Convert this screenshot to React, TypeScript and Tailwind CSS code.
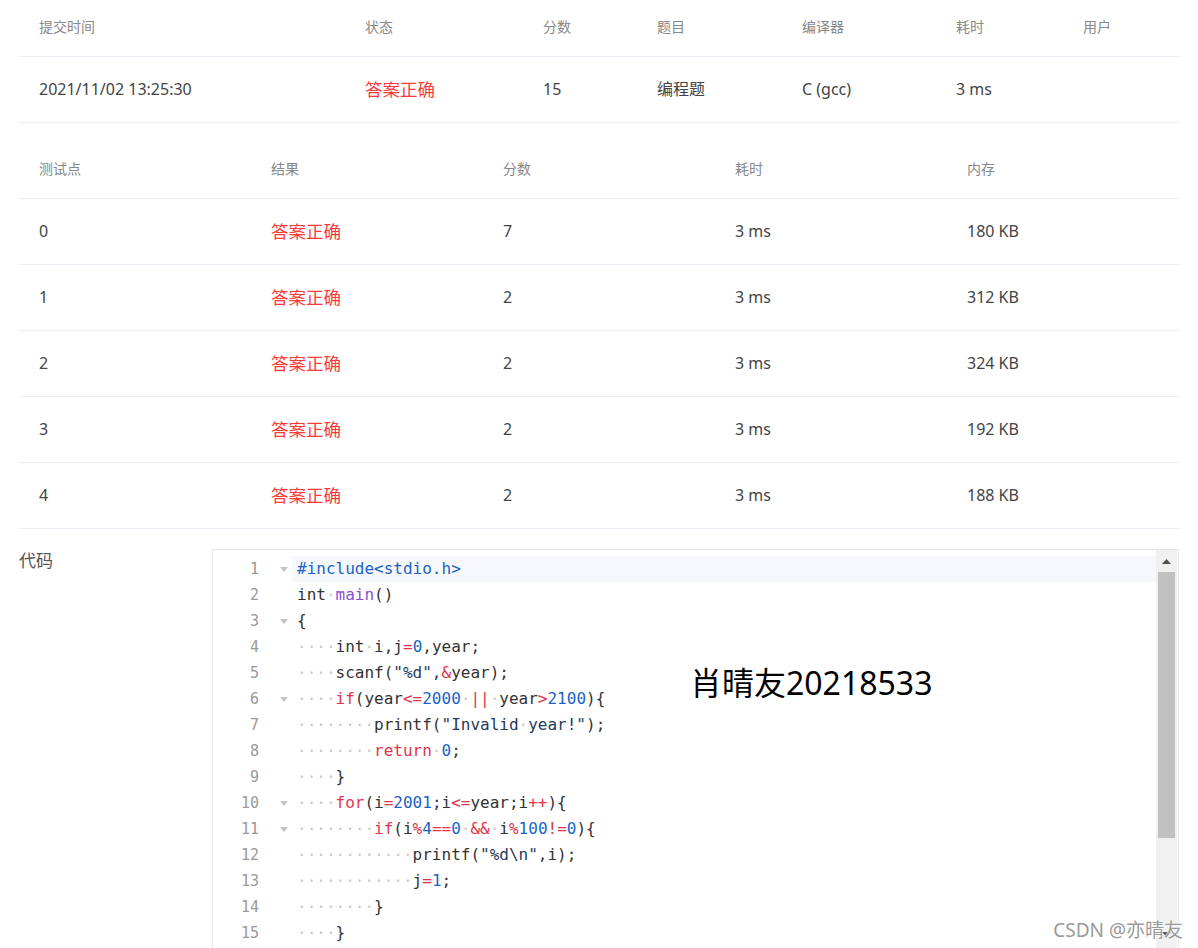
import React from "react";

const RED = "#e0344b";
const BLUE = "#1a63c6";
const PURPLE = "#8a4fcf";
const STR = "#1f3a5c";
const DOT = "#c9c9c9";

type Tok = [string, string?];

const summaryCols = ["326px", "178px", "114px", "145px", "154px", "127px", "116px"];

const cases = [
  { id: "0", score: "7", mem: "180 KB" },
  { id: "1", score: "2", mem: "312 KB" },
  { id: "2", score: "2", mem: "324 KB" },
  { id: "3", score: "2", mem: "192 KB" },
  { id: "4", score: "2", mem: "188 KB" },
];

const d = (n: number): Tok => ["·".repeat(n), DOT];

const code: { fold?: boolean; toks: Tok[] }[] = [
  { fold: true, toks: [["#include<stdio.h>", BLUE]] },
  { toks: [["int"], d(1), ["main", PURPLE], ["()"]] },
  { fold: true, toks: [["{"]] },
  { toks: [d(4), ["int"], d(1), ["i,j"], ["=", RED], ["0", BLUE], [",year;"]] },
  { toks: [d(4), ["scanf("], ['"%d"', STR], [","], ["&", RED], ["year);"]] },
  {
    fold: true,
    toks: [d(4), ["if", RED], ["(year"], ["<=", RED], ["2000", BLUE], d(1), ["||", RED], d(1), ["year"], [">", RED], ["2100", BLUE], ["){"]],
  },
  { toks: [d(8), ["printf("], ['"Invalid', STR], d(1), ['year!"', STR], [");"]] },
  { toks: [d(8), ["return", RED], d(1), ["0", BLUE], [";"]] },
  { toks: [d(4), ["}"]] },
  {
    fold: true,
    toks: [d(4), ["for", RED], ["(i"], ["=", RED], ["2001", BLUE], [";i"], ["<=", RED], ["year;i"], ["++", RED], ["){"]],
  },
  {
    fold: true,
    toks: [d(8), ["if", RED], ["(i"], ["%", RED], ["4", BLUE], ["==", RED], ["0", BLUE], d(1), ["&&", RED], d(1), ["i"], ["%", RED], ["100", BLUE], ["!=", RED], ["0", BLUE], ["){"]],
  },
  { toks: [d(12), ["printf("], ['"%d\\n"', STR], [",i);"]] },
  { toks: [d(12), ["j"], ["=", RED], ["1", BLUE], [";"]] },
  { toks: [d(8), ["}"]] },
  { toks: [d(4), ["}"]] },
];

function Fold() {
  return (
    <svg width="8" height="5" viewBox="0 0 8 5">
      <polygon points="0,0 8,0 4,5" fill="#c4c4c4" />
    </svg>
  );
}

export default function App() {
  return (
    <div
      className="relative h-[948px] w-full overflow-hidden bg-white text-[#444]"
      style={{ fontFamily: '"Noto Sans", "Noto Sans CJK SC", sans-serif' }}
    >
      <div className="mx-[19px]">
        {/* submission summary */}
        <div className="grid border-b border-[#ebeef5]" style={{ gridTemplateColumns: summaryCols.join(" ") }}>
          {["提交时间", "状态", "分数", "题目", "编译器", "耗时", "用户"].map((h) => (
            <div key={h} className="flex h-[56px] items-center pb-[4px] pl-[20px] text-[14px] text-[#888]">
              {h}
            </div>
          ))}
        </div>
        <div className="grid border-b border-[#ebeef5]" style={{ gridTemplateColumns: summaryCols.join(" ") }}>
          <div className="flex h-[65px] items-center pb-[1px] pl-[20px] text-[16px]">2021/11/02 13:25:30</div>
          <div className="flex h-[65px] items-center pb-[1px] pl-[20px] text-[17.5px] text-[#fa3a3a]">答案正确</div>
          <div className="flex h-[65px] items-center pb-[1px] pl-[20px] text-[16px]">15</div>
          <div className="flex h-[65px] items-center pb-[1px] pl-[20px] text-[16px]">编程题</div>
          <div className="flex h-[65px] items-center pb-[1px] pl-[20px] text-[16px]">C (gcc)</div>
          <div className="flex h-[65px] items-center pb-[1px] pl-[20px] text-[16px]">3 ms</div>
          <div className="flex h-[65px] items-center pl-[20px] text-[16px]"></div>
        </div>

        {/* test cases */}
        <div className="mt-[20px] grid grid-cols-5 border-b border-[#ebeef5]">
          {["测试点", "结果", "分数", "耗时", "内存"].map((h) => (
            <div key={h} className="flex h-[55px] items-center pb-[5px] pl-[20px] text-[14px] text-[#888]">
              {h}
            </div>
          ))}
        </div>
        {cases.map((c) => (
          <div key={c.id} className="grid h-[66px] grid-cols-5 items-center border-b border-[#ebeef5] pb-[1px] text-[16px]">
            <div className="pl-[20px]">{c.id}</div>
            <div className="pl-[20px] text-[17.5px] text-[#fa3a3a]">答案正确</div>
            <div className="pl-[20px]">{c.score}</div>
            <div className="pl-[20px]">3 ms</div>
            <div className="pl-[20px]">{c.mem}</div>
          </div>
        ))}

        {/* code */}
        <div className="mt-[20px] flex">
          <div className="w-[193px] text-[17px] leading-[24px] text-[#555]">代码</div>
          <div className="flex h-[400px] flex-1 border border-[#e6e6e6]">
            <div
              className="w-[79px] pt-[6px] text-[15px] text-[#999]"
              style={{ fontFamily: '"DejaVu Sans Mono", monospace' }}
            >
              {code.map((l, i) => (
                <div key={i} className="flex h-[26px] items-center">
                  <span className="w-[46px] text-right">{i + 1}</span>
                  <span className="flex w-[33px] justify-end pr-[4px]">{l.fold && <Fold />}</span>
                </div>
              ))}
            </div>
            <div
              className="relative flex-1 pt-[6px] text-[16px] text-[#333]"
              style={{ fontFamily: '"DejaVu Sans Mono", monospace' }}
            >
              {code.map((l, i) => (
                <div
                  key={i}
                  className={`h-[26px] whitespace-pre pl-[5px] leading-[26px] ${i === 0 ? "bg-[#f6f8fb]" : ""}`}
                >
                  {l.toks.map((t, j) => (
                    <span key={j} style={t[1] ? { color: t[1] } : undefined}>
                      {t[0]}
                    </span>
                  ))}
                </div>
              ))}
              <div
                className="absolute left-[398px] top-[111px] whitespace-nowrap text-[32px] leading-[44px] text-black"
                style={{ fontFamily: '"Noto Sans", "Noto Sans CJK SC", sans-serif' }}
              >
                肖晴友20218533
              </div>
            </div>
            {/* scrollbar */}
            <div className="mr-px flex w-[21px] flex-col items-center bg-[#f0f0f0]">
              <div className="flex h-[22px] items-center justify-center">
                <svg width="9" height="5" viewBox="0 0 9 5">
                  <polygon points="0,5 9,5 4.5,0" fill="#505050" />
                </svg>
              </div>
              <div className="h-[266px] w-[17px] bg-[#c1c1c1]"></div>
              <div className="flex-1"></div>
              <div className="flex h-[22px] items-start justify-center pt-[6px]">
                <svg width="9" height="5" viewBox="0 0 9 5">
                  <polygon points="0,0 9,0 4.5,5" fill="#505050" />
                </svg>
              </div>
            </div>
          </div>
        </div>
      </div>

      <div
        className="absolute bottom-[5px] right-[15px] text-[19px] leading-[26px] text-[#9a9a9a]"
        style={{ textShadow: "0 0 2px #fff, 0 0 2px #fff" }}
      >
        CSDN @亦晴友
      </div>
    </div>
  );
}
